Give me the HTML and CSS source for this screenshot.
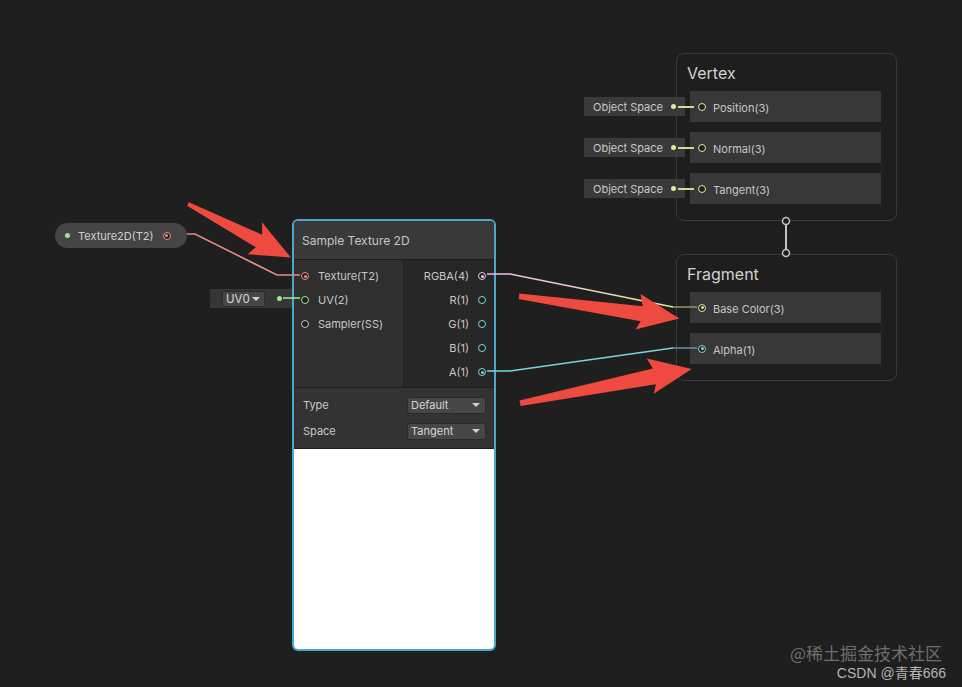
FILE: index.html
```html
<!DOCTYPE html>
<html lang="en">
<head>
<meta charset="utf-8">
<title>Shader Graph</title>
<link rel="stylesheet" href="styles.css">
</head>
<body>
<div class="canvas">
  <svg class="wires" width="962" height="687" viewBox="0 0 962 687">
    <defs>
      <linearGradient id="rgbaGrad" x1="487" y1="0" x2="673" y2="0" gradientUnits="userSpaceOnUse">
        <stop offset="0" stop-color="#f0b8e8"/>
        <stop offset="1" stop-color="#e8e89a"/>
      </linearGradient>
    </defs>
    <path d="M187,234 H195 L277,275 H300" fill="none" stroke="#e88a8a" stroke-width="1.6"/>
    <path d="M283,298 H300" fill="none" stroke="#9ee68c" stroke-width="1.6"/>
    <path d="M487,274 H510 L673,307" fill="none" stroke="url(#rgbaGrad)" stroke-width="1.6"/>
    <path d="M673,307 H697" fill="none" stroke="#8e8e5e" stroke-width="1.6"/>
    <path d="M487,371 H510 L673,348" fill="none" stroke="#7ad6d6" stroke-width="1.6"/>
    <path d="M673,348 H697" fill="none" stroke="#5a9494" stroke-width="1.6"/>
    <path d="M786,225 V249" stroke="#c4c4c4" stroke-width="2"/>
    <circle cx="786" cy="221" r="3.5" fill="#1f1f1f" stroke="#c4c4c4" stroke-width="1.5"/>
    <circle cx="786" cy="253" r="3.5" fill="#1f1f1f" stroke="#c4c4c4" stroke-width="1.5"/>
  </svg>

  <div class="prop-node">
    <span class="dot green"></span>
    <span class="prop-label">Texture2D(T2)</span>
    <span class="port pink filled"></span>
  </div>

  <div class="uv-input">
    <span class="mini-drop"><span>UV0</span><span class="caret"></span></span>
    <span class="dot green"></span>
  </div>

  <div class="node sample">
    <div class="node-title">Sample Texture 2D</div>
    <div class="node-ports">
      <div class="ports-in">
        <div class="port-row"><span class="port pink filled"></span><span>Texture(T2)</span></div>
        <div class="port-row"><span class="port green"></span><span>UV(2)</span></div>
        <div class="port-row"><span class="port gray"></span><span>Sampler(SS)</span></div>
      </div>
      <div class="ports-out">
        <div class="port-row out"><span>RGBA(4)</span><span class="port lilac filled"></span></div>
        <div class="port-row out"><span>R(1)</span><span class="port cyan"></span></div>
        <div class="port-row out"><span>G(1)</span><span class="port cyan"></span></div>
        <div class="port-row out"><span>B(1)</span><span class="port cyan"></span></div>
        <div class="port-row out"><span>A(1)</span><span class="port cyan filled"></span></div>
      </div>
    </div>
    <div class="node-props">
      <div class="prop-row"><span>Type</span><span class="dropdown"><span>Default</span><span class="caret"></span></span></div>
      <div class="prop-row"><span>Space</span><span class="dropdown"><span>Tangent</span><span class="caret"></span></span></div>
    </div>
    <div class="node-preview"></div>
  </div>

  <div class="stack vertex">
    <div class="stack-title">Vertex</div>
    <div class="stack-row">
      <div class="inline-input"><span>Object Space</span><span class="dot yellow"></span></div>
      <span class="link yellow"></span>
      <span class="port yellow"></span><span>Position(3)</span>
    </div>
    <div class="stack-row">
      <div class="inline-input"><span>Object Space</span><span class="dot yellow"></span></div>
      <span class="link yellow"></span>
      <span class="port yellow"></span><span>Normal(3)</span>
    </div>
    <div class="stack-row">
      <div class="inline-input"><span>Object Space</span><span class="dot yellow"></span></div>
      <span class="link yellow"></span>
      <span class="port yellow"></span><span>Tangent(3)</span>
    </div>
  </div>

  <div class="stack fragment">
    <div class="stack-title">Fragment</div>
    <div class="stack-row"><span class="port yellow filled"></span><span>Base Color(3)</span></div>
    <div class="stack-row"><span class="port cyan filled"></span><span>Alpha(1)</span></div>
  </div>

  <svg class="arrows" width="962" height="687" viewBox="0 0 962 687">
    <g transform="translate(188,204) rotate(27.5)">
      <polygon points="0,-2 80,-7 74,-18 116,0 76,17 80,7 0,2" fill="#ee4a3f"/>
    </g>
    <g transform="translate(519,296) rotate(8)">
      <polygon points="0,-2.5 124,-7 120,-19 162,0 120,17 124,8 0,3" fill="#ee4a3f"/>
    </g>
    <g transform="translate(520,403) rotate(-11.2)">
      <polygon points="0,-2.5 137,-8 133,-19 175,0 133,17 137,8 0,3" fill="#ee4a3f"/>
    </g>
  </svg>

  <div class="watermark">
    <div class="wm-juejin">@稀土掘金技术社区</div>
    <div class="wm-csdn">CSDN @青春666</div>
  </div>
</div>
</body>
</html>
```

FILE: styles.css
```css
* { box-sizing: border-box; }
html, body { margin: 0; padding: 0; background: #1f1f1f; }
body {
  font-family: Inter, "Noto Sans", "Liberation Sans", sans-serif;
  color: #c8c8c8;
  font-size: 11px;
}
.canvas {
  position: relative;
  width: 962px;
  height: 687px;
  overflow: hidden;
  background: #1f1f1f;
}
.wires, .arrows {
  position: absolute;
  left: 0;
  top: 0;
  pointer-events: none;
}
.wires { z-index: 4; }
.arrows { z-index: 5; }

/* generic ports */
.port {
  display: inline-block;
  width: 8px;
  height: 8px;
  border-radius: 50%;
  border: 1.5px solid #bdbdbd;
  background: #1f1f1f;
  flex: none;
  position: relative;
}
.port.filled::after {
  content: "";
  position: absolute;
  left: 50%;
  top: 50%;
  width: 3px;
  height: 3px;
  margin: -1.5px 0 0 -1.5px;
  border-radius: 50%;
  background: currentColor;
}
.port.pink { border-color: #ef8e8e; color: #ef8e8e; }
.port.green { border-color: #9ee68c; color: #9ee68c; }
.port.gray { border-color: #c0c0c0; }
.port.cyan { border-color: #7fd8cf; color: #7fd8cf; }
.port.lilac { border-color: #efc0ea; color: #efc0ea; }
.port.yellow { border-color: #e8e8a0; color: #e8e8a0; }

.dot {
  display: inline-block;
  width: 5px;
  height: 5px;
  border-radius: 50%;
  flex: none;
}
.dot.green { background: #9ee68c; }
.dot.yellow { background: #e8e8a0; }

.caret {
  display: inline-block;
  width: 0;
  height: 0;
  border-left: 4px solid transparent;
  border-right: 4px solid transparent;
  border-top: 4px solid #d2d2d2;
  flex: none;
}

/* property node (Texture2D) */
.prop-node {
  position: absolute;
  left: 55px;
  top: 223px;
  width: 132px;
  height: 25px;
  border-radius: 13px;
  background: #454545;
  display: flex;
  align-items: center;
  padding: 0 0 0 10px;
  z-index: 2;
}
.prop-node .prop-label {
  margin-left: 8px;
  color: #cfcfcf;
  font-size: 11px;
}
.prop-node .port { margin-left: 9px; }

/* UV input */
.uv-input {
  position: absolute;
  left: 210px;
  top: 289px;
  width: 82px;
  height: 19px;
  background: #363636;
  display: flex;
  align-items: center;
  padding-left: 12px;
  z-index: 2;
}
.mini-drop {
  display: flex;
  align-items: center;
  justify-content: space-between;
  width: 43px;
  height: 16px;
  background: #474747;
  border: 1px solid #2c2c2c;
  border-radius: 2px;
  padding: 0 4px 0 3px;
  color: #d8d8d8;
  font-size: 11.5px;
}
.uv-input .dot { margin-left: 12px; }

/* Sample texture node */
.node.sample {
  position: absolute;
  left: 292px;
  top: 219px;
  width: 204px;
  height: 432px;
  border: 2px solid #4ba7cf;
  border-radius: 6px;
  background: #2e2e2e;
  display: flex;
  flex-direction: column;
  overflow: hidden;
  z-index: 3;
}
.node-title {
  height: 39px;
  flex: none;
  background: #393939;
  border-bottom: 1px solid #1c1c1c;
  padding: 0 0 0 8px;
  display: flex;
  align-items: center;
  font-size: 12px;
  color: #c6c6c6;
}
.node-ports {
  height: 128px;
  flex: none;
  display: flex;
  border-bottom: 1px solid #1e1e1e;
}
.ports-in {
  width: 110px;
  background: #2f2f2f;
  border-right: 1px solid #242424;
  padding-top: 4px;
}
.ports-out {
  flex: 1;
  background: #272727;
  padding-top: 4px;
}
.port-row {
  height: 24px;
  display: flex;
  align-items: center;
  gap: 9px;
  padding-left: 7px;
  color: #c8c8c8;
  font-size: 11px;
}
.port-row.out {
  justify-content: flex-end;
  padding-left: 0;
  padding-right: 8px;
  gap: 9px;
}
.node-props {
  height: 61px;
  flex: none;
  background: #333333;
  border-bottom: 1px solid #1e1e1e;
  padding: 4px 8px 0 9px;
}
.prop-row {
  height: 26px;
  display: flex;
  align-items: center;
  justify-content: space-between;
  color: #c8c8c8;
  font-size: 11px;
}
.dropdown {
  width: 79px;
  height: 17px;
  background: #474747;
  border: 1px solid #2a2a2a;
  border-radius: 3px;
  display: flex;
  align-items: center;
  justify-content: space-between;
  padding: 0 5px 0 3px;
  color: #d4d4d4;
  font-size: 11px;
}
.node-preview {
  flex: 1;
  background: #ffffff;
}

/* master stacks */
.stack {
  position: absolute;
  left: 676px;
  width: 221px;
  border: 1px solid #3a3a3a;
  border-radius: 8px;
  background: #1e1e1e;
  padding: 9px 15px 16px 13px;
  display: flex;
  flex-direction: column;
  gap: 10px;
  z-index: 2;
}
.stack.vertex { top: 53px; }
.stack.fragment { top: 254px; }
.stack-title {
  height: 20px;
  font-size: 16px;
  color: #d2d2d2;
  display: flex;
  align-items: center;
  margin: 0 0 -2px -3px;
}
.stack-row {
  position: relative;
  height: 31px;
  background: #383838;
  display: flex;
  align-items: center;
  gap: 7px;
  padding-left: 8px;
  font-size: 11px;
  color: #c6c6c6;
}
.stack-row > span:last-child { margin-top: 2px; }
.inline-input {
  position: absolute;
  left: -106px;
  top: 6px;
  width: 101px;
  height: 19px;
  background: #3a3a3a;
  display: flex;
  align-items: center;
  justify-content: space-between;
  padding: 0 9px 0 9px;
  font-size: 11px;
  color: #c8c8c8;
}
.link {
  position: absolute;
  left: -12px;
  top: 15px;
  width: 16px;
  height: 2px;
}
.link.yellow { background: #d8d890; }

/* watermark */
.watermark {
  position: absolute;
  right: 16px;
  top: 642px;
  text-align: right;
  z-index: 6;
}
.wm-juejin {
  font-family: "Noto Sans CJK SC", sans-serif;
  font-size: 17px;
  line-height: 21px;
  color: #6e6e6e;
  margin-right: 4px;
}
.wm-csdn {
  font-size: 14px;
  line-height: 16px;
  margin-top: 2px;
  color: #b4b4b4;
  font-family: "Liberation Sans", "Noto Sans CJK SC", sans-serif;
}
```
